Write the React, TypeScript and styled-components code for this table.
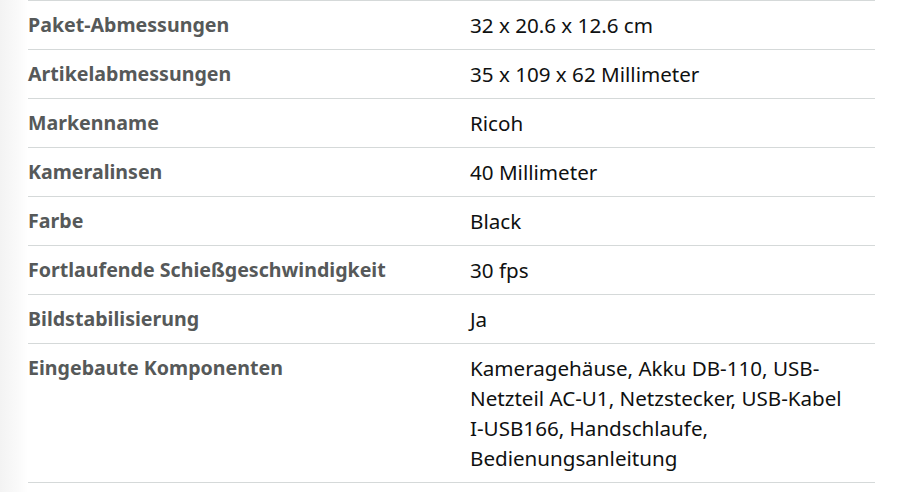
import React from "react";
import styled, { createGlobalStyle } from "styled-components";

const Global = createGlobalStyle`
  html, body { margin: 0; padding: 0; background: #fff; }
  body {
    font-family: "Noto Sans", "Liberation Sans", sans-serif;
    width: 910px;
    height: 492px;
    overflow: hidden;
    background: linear-gradient(to right, #f3f3f3 0px, #fafafa 18px, #ffffff 28px);
  }
`;

const Page = styled.div`
  padding: 0 35px 0 28px;
`;

const Table = styled.div`
  display: flex;
  flex-direction: column;
  border-top: 1px solid #d5d9d9;
  background: #fff;
`;

const Row = styled.div`
  display: grid;
  grid-template-columns: 442px 1fr;
  padding: 9px 0;
  border-bottom: 1px solid #d5d9d9;
  line-height: 30px;
`;

const Label = styled.div`
  font-size: 19.6px;
  font-weight: 700;
  color: #565959;
`;

const Value = styled.div`
  font-size: 20.6px;
  color: #0f1111;
  max-width: 385px;
`;

const rows: [string, string][] = [
  ["Paket-Abmessungen", "32 x 20.6 x 12.6 cm"],
  ["Artikelabmessungen", "35 x 109 x 62 Millimeter"],
  ["Markenname", "Ricoh"],
  ["Kameralinsen", "40 Millimeter"],
  ["Farbe", "Black"],
  ["Fortlaufende Schießgeschwindigkeit", "30 fps"],
  ["Bildstabilisierung", "Ja"],
  [
    "Eingebaute Komponenten",
    "Kameragehäuse, Akku DB-110, USB-Netzteil AC-U1, Netzstecker, USB-Kabel I-USB166, Handschlaufe, Bedienungsanleitung",
  ],
];

export default function App() {
  return (
    <>
      <Global />
      <Page>
        <Table>
          {rows.map(([k, v]) => (
            <Row key={k}>
              <Label>{k}</Label>
              <Value>{v}</Value>
            </Row>
          ))}
        </Table>
      </Page>
    </>
  );
}
